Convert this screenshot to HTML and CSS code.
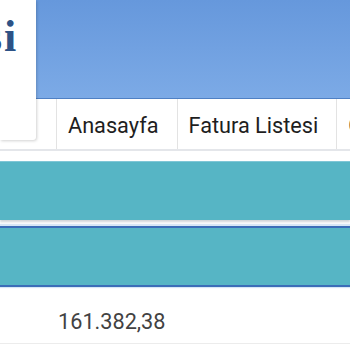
FILE: index.html
```html
<!DOCTYPE html>
<html>
<head>
<meta charset="utf-8">
<link rel="stylesheet" href="styles.css">
</head>
<body>
<div class="page">
  <header class="header">
    <div class="logo-card"><span class="logo-text">si</span></div>
    <div class="header-main">
      <div class="banner"></div>
      <nav class="nav">
        <div class="nav-spacer"></div>
        <a class="nav-item">Anasayfa</a>
        <a class="nav-item">Fatura Listesi</a>
        <a class="nav-item">Gelen Faturalar</a>
      </nav>
    </div>
  </header>
  <div class="panels">
    <div class="panel panel-first"></div>
    <div class="panel panel-second"></div>
  </div>
  <div class="row">
    <span class="amount">161.382,38</span>
  </div>
</div>
</body>
</html>
```
FILE: styles.css
```css
html, body {
  margin: 0;
  padding: 0;
  background: #ffffff;
}
.page {
  width: 350px;
  height: 350px;
  overflow: hidden;
  font-family: Roboto, "Liberation Sans", sans-serif;
}
.header {
  display: flex;
  height: 149px;
  border-bottom: 2px solid #e4e6ea;
  position: relative;
}
.logo-card {
  width: 36px;
  height: 140px;
  flex: none;
  background: #fff;
  box-shadow: 1px 1px 3px rgba(0,0,0,0.18);
  overflow: hidden;
  position: relative;
  z-index: 2;
  border-bottom-right-radius: 3px;
}
.logo-text {
  display: block;
  margin-left: -15px;
  margin-top: 11px;
  font-family: "Liberation Serif", serif;
  font-weight: bold;
  font-size: 44px;
  line-height: 52px;
  color: #2d5286;
  letter-spacing: 2px;
}
.header-main {
  flex: 1;
  display: flex;
  flex-direction: column;
  min-width: 0;
}
.banner {
  height: 98px;
  background: linear-gradient(#6698dc, #7caae6);
  border-bottom: 1px solid #4f80c4;
  flex: none;
}
.nav {
  flex: 1;
  display: flex;
  align-items: stretch;
  white-space: nowrap;
}
.nav-spacer {
  width: 20px;
  flex: none;
}
.nav-item {
  display: flex;
  align-items: center;
  padding: 2px 18px 0 11px;
  border-left: 1px solid #e3e3e3;
  font-size: 21.7px;
  color: #1e1e1e;
  flex: none;
}
.panels {
  padding-top: 10px;
  display: flex;
  flex-direction: column;
}
.panel {
  background: #56b5c5;
}
.panel-first {
  height: 58px;
  border-top: 1px solid #7fc6d6;
  box-shadow: 0 2px 2px rgba(120,130,140,0.35);
}
.panel-second {
  margin-top: 6px;
  height: 57px;
  border-top: 2px solid #3b6db8;
  border-bottom: 2px solid #3b6db8;
  box-shadow: 0 -2px 1px #d7e6f5, 0 1px 1px #d7e6f5;
}
.row {
  height: 56px;
  border-bottom: 1px solid #ececec;
  display: flex;
  align-items: center;
  padding-left: 58px;
}
.amount {
  font-size: 21.7px;
  color: #424242;
  padding-top: 12px;
}
```
